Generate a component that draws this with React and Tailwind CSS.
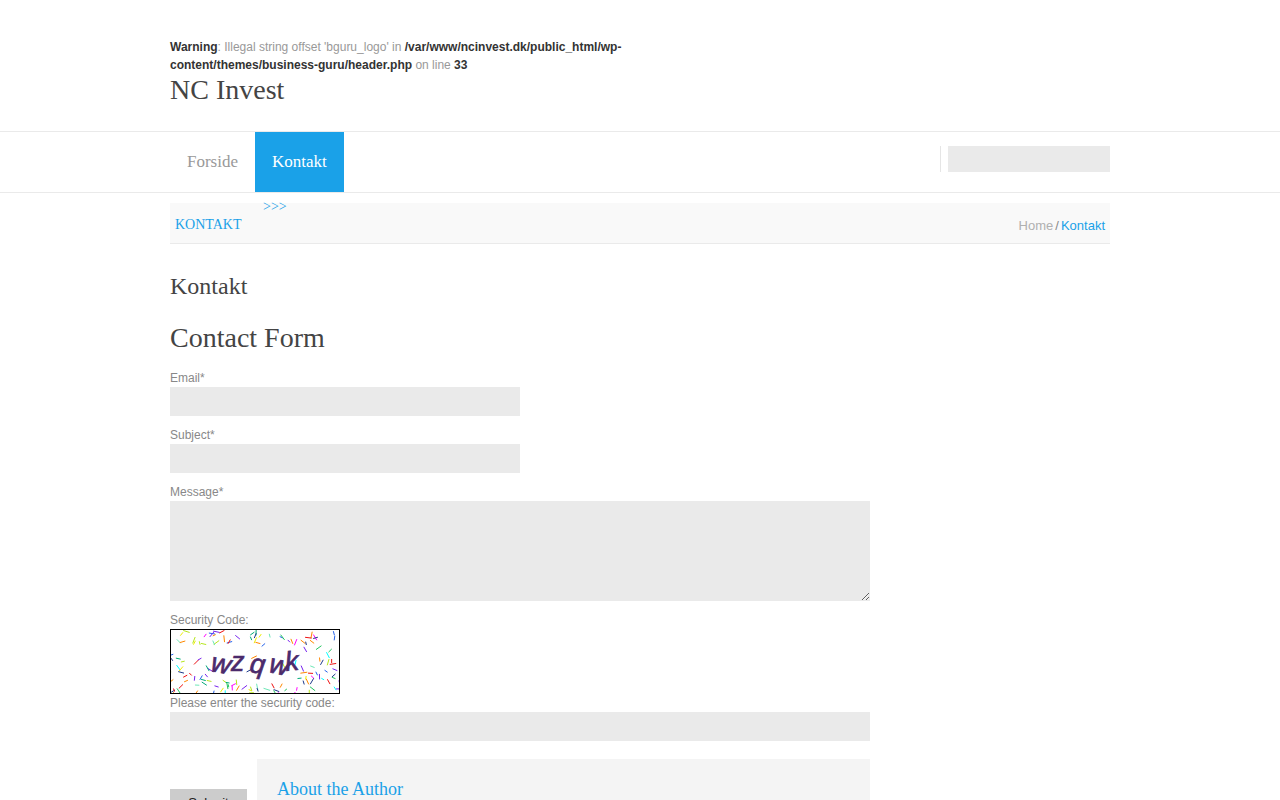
const sans = "font-['Liberation_Sans',Arial,sans-serif]"

// captcha noise: seeded so every render gives the same specks
const colors = ['#22c55e', '#2563eb', '#f0f', '#0ff', '#e11', '#ee0', '#0a7', '#72e', '#b5e61d', '#f80', '#1e3a8a', '#6ee7b7']
function makeNoise() {
  let seed = 11
  const rnd = () => {
    seed = (seed * 16807) % 2147483647
    return seed / 2147483647
  }
  const out = []
  while (out.length < 135) {
    const x = rnd() * 168
    const y = rnd() * 63
    // keep the middle of the image mostly clear for the letters
    if (x > 36 && x < 130 && y > 16 && y < 52 && rnd() > 0.12) continue
    const a = rnd() * Math.PI
    const l = 3 + rnd() * 4
    out.push({ x, y, x2: x + Math.cos(a) * l, y2: y + Math.sin(a) * l, c: colors[Math.floor(rnd() * colors.length)] })
  }
  return out
}
const noise = makeNoise()

function Captcha() {
  const letters = [
    ['w', 39, 41, 10],
    ['z', 60, 41, 0],
    ['q', 78, 42, 8],
    ['w', 97, 42, 12],
    ['k', 115, 41, -6],
  ]
  return (
    <div className="w-[170px] h-[65px] border border-black bg-white">
      <svg width="168" height="63" viewBox="0 0 168 63">
        {noise.map((n, i) => (
          <line key={i} x1={n.x} y1={n.y} x2={n.x2} y2={n.y2} stroke={n.c} strokeWidth="1" />
        ))}
        {letters.map(([ch, x, y, r], i) => (
          <text
            key={i}
            x={x}
            y={y}
            transform={`rotate(${r} ${x} ${y})`}
            fill="#4b2a6b"
            stroke="#4b2a6b"
            strokeWidth="0.7"
            fontFamily="'Liberation Sans', sans-serif"
            fontStyle="italic"
            fontSize="27"
          >
            {ch}
          </text>
        ))}
      </svg>
    </div>
  )
}

export default function App() {
  return (
    <div className={`h-[800px] overflow-hidden bg-white ${sans} text-xs text-[#888]`}>

      {/* header */}
      <div className="h-[132px] border-b border-[#eaeaea]">
        <div className="w-[940px] mx-auto pt-[38px]">
          <div className="w-[470px] leading-[18px] text-[#999]">
            <b className="text-[#333]">Warning</b>: Illegal string offset 'bguru_logo' in <b className="text-[#333]">/var/www/ncinvest.dk/public_html/wp-content/themes/business-guru/header.php</b> on line <b className="text-[#333]">33</b>
          </div>
          <h1 className="font-['Liberation_Serif',serif] text-[28px] leading-[32px] text-[#444]">NC Invest</h1>
        </div>
      </div>

      {/* nav */}
      <div className="h-[61px] border-b border-[#eaeaea]">
        <div className="w-[940px] mx-auto flex font-['Liberation_Serif',serif] text-[17px]">
          <a className="h-[60px] px-[17px] leading-[60px] text-[#999]">Forside</a>
          <a className="h-[60px] px-[17px] leading-[60px] bg-[#1aa1e8] text-white">Kontakt</a>
          <div className="ml-auto flex items-start pt-[14px]">
            <div className="w-px h-[26px] bg-[#e5e5e5] mr-[7px]" />
            <div className="w-[162px] h-[26px] bg-[#eaeaea]" />
          </div>
        </div>
      </div>

      {/* breadcrumb */}
      <div className="w-[940px] mx-auto mt-[10px] h-[41px] bg-[#f9f9f9] border-b border-[#eaeaea] relative flex justify-between font-['Liberation_Serif',serif]">
        <span className="pl-[5px] pt-[13px] text-sm leading-[18px] text-[#1aa1e8]">KONTAKT</span>
        <span className="absolute left-[93px] top-[-5px] text-sm leading-[18px] text-[#1aa1e8]">&gt;&gt;&gt;</span>
        <span className={`pr-[5px] pt-[14px] text-[13px] leading-[18px] ${sans} text-[#b0b0b0]`}>
          Home<span className="mx-[2px] text-[#888]">/</span><span className="text-[#1aa1e8]">Kontakt</span>
        </span>
      </div>

      {/* content */}
      <div className="w-[940px] mx-auto">
        <h2 className="mt-[27px] font-['Liberation_Serif',serif] text-2xl leading-[30px] text-[#444]">Kontakt</h2>
        <h3 className="mt-[19px] font-['Liberation_Serif',serif] text-[28px] leading-[36px] text-[#444]">Contact Form</h3>

        <label className="block mt-[13px] leading-[18px]">Email*</label>
        <div className="w-[350px] h-[29px] bg-[#eaeaea]" />
        <label className="block mt-[10px] leading-[18px]">Subject*</label>
        <div className="w-[350px] h-[29px] bg-[#eaeaea]" />
        <label className="block mt-[10px] leading-[18px]">Message*</label>
        <textarea className="block w-[700px] h-[100px] bg-[#eaeaea] outline-none" />
        <label className="block mt-[10px] leading-[18px]">Security Code:</label>
        <Captcha />
        <label className="block leading-[18px]">Please enter the security code:</label>
        <div className="w-[700px] h-[29px] bg-[#eaeaea]" />

        {/* bottom row */}
        <div className="w-[700px] mt-[18px] flex items-start gap-[10px]">
          <button className="mt-[30px] w-[77px] h-[28px] bg-[#ccc] text-[13px] leading-[28px] text-[#222]">Submit</button>
          <div className="flex-1 h-[80px] bg-[#f4f4f4] px-5 pt-[18px]">
            <h4 className="font-['Liberation_Serif',serif] text-lg leading-6 text-[#1aa1e8]">About the Author</h4>
          </div>
        </div>
      </div>
    </div>
  )
}
